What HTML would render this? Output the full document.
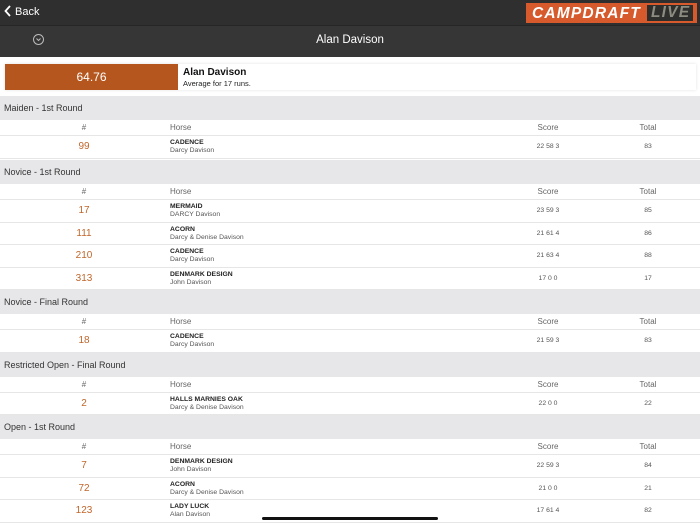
<!DOCTYPE html>
<html><head><meta charset="utf-8"><style>
*{margin:0;padding:0;box-sizing:border-box}
body{width:700px;height:525px;overflow:hidden;background:#fff;font-family:"Liberation Sans",sans-serif;position:relative}
.top{position:absolute;left:0;top:0;width:700px;height:25px;background:#2f2f2f}
.sub{position:absolute;left:0;top:25px;width:700px;height:32px;background:#363636;border-top:1px solid #262626}
.back{position:absolute;left:4px;top:5px;color:#fff;font-size:11px}
.title{position:absolute;left:0;width:700px;top:34px;text-align:center;color:#fff;font-size:11.5px}
.circ{position:absolute;left:33px;top:34px;width:11px;height:11px;border:1px solid #bbb;border-radius:50%}
.logo{position:absolute;left:526px;top:3px;width:171px;height:20px;background:#d65a2c}
.logo .a{position:absolute;left:6px;top:2px;color:#fff;font-weight:bold;font-style:italic;font-size:15.5px;letter-spacing:1.2px}
.logo .b{position:absolute;left:121px;top:2px;width:46px;height:16px;background:#2e2e2c}
.logo .b span{position:absolute;left:4px;top:-1px;color:#8c8c80;font-weight:bold;font-style:italic;font-size:15.5px;letter-spacing:1.2px}
.card{position:absolute;left:5px;top:64px;width:691px;height:26px;background:#fff;box-shadow:0 0 3px rgba(0,0,0,.12)}
.avg{position:absolute;left:0;top:0;width:173px;height:26px;background:#b5561f;color:#fff;font-size:12px;text-align:center;line-height:26px}
.nm{position:absolute;left:178px;top:3px;font-size:10px;font-weight:bold;color:#111}
.sm{position:absolute;left:178px;top:15px;font-size:7.5px;color:#222}
.list{position:absolute;left:0;top:96px;width:700px}
.sec{height:24px;background:#e7e7e9;font-size:9px;color:#333;padding-left:4px;line-height:24px}
.hd,.row{position:relative;border-bottom:1px solid #e6e6e6}
.hd{height:16px;font-size:8px;color:#666}
.row{height:22.5px}
.c1{position:absolute;left:44px;width:80px;text-align:center}
.c2{position:absolute;left:170px}
.c3{position:absolute;left:508px;width:80px;text-align:center}
.c4{position:absolute;left:608px;width:80px;text-align:center}
.hd span{top:3px}
.row .c1{top:5px;color:#c0662b;font-size:10px}
.row .c2{top:3px;font-size:6.8px;font-weight:bold;color:#222}
.row .c2 i{display:block;font-style:normal;font-weight:normal;color:#555;margin-top:1px}
.row .c3,.row .c4{top:7px;font-size:6.8px;color:#555}
.gap{height:1.5px;background:#fff}
.bar{position:absolute;left:262px;top:517px;width:176px;height:3px;border-radius:2px;background:#111}
</style></head><body>
<div class="top"></div><div class="sub"></div>
<div class="back"><svg width="8" height="12" viewBox="0 0 8 12" style="vertical-align:-2px"><path d="M6 1L1.5 6L6 11" stroke="#fff" stroke-width="1.8" fill="none"/></svg> Back</div>
<div class="circ"><svg width="9" height="9" viewBox="0 0 9 9" style="position:absolute;left:0;top:0"><path d="M2.5 3.5L4.5 5.5L6.5 3.5" stroke="#bbb" stroke-width="1" fill="none"/></svg></div>
<div class="title">Alan Davison</div>
<div class="logo"><span class="a">CAMPDRAFT</span><div class="b"><span>LIVE</span></div></div>
<div class="card"><div class="avg">64.76</div><div class="nm">Alan Davison</div><div class="sm">Average for 17 runs.</div></div>
<div class="list">
<div class="sec">Maiden - 1st Round</div>
<div class="hd"><span class="c1">#</span><span class="c2">Horse</span><span class="c3">Score</span><span class="c4">Total</span></div>
<div class="row"><span class="c1">99</span><span class="c2">CADENCE<i>Darcy Davison</i></span><span class="c3">22 58 3</span><span class="c4">83</span></div>
<div class="gap"></div>
<div class="sec">Novice - 1st Round</div>
<div class="hd"><span class="c1">#</span><span class="c2">Horse</span><span class="c3">Score</span><span class="c4">Total</span></div>
<div class="row"><span class="c1">17</span><span class="c2">MERMAID<i>DARCY Davison</i></span><span class="c3">23 59 3</span><span class="c4">85</span></div>
<div class="row"><span class="c1">111</span><span class="c2">ACORN<i>Darcy &amp; Denise Davison</i></span><span class="c3">21 61 4</span><span class="c4">86</span></div>
<div class="row"><span class="c1">210</span><span class="c2">CADENCE<i>Darcy Davison</i></span><span class="c3">21 63 4</span><span class="c4">88</span></div>
<div class="row"><span class="c1">313</span><span class="c2">DENMARK DESIGN<i>John Davison</i></span><span class="c3">17 0 0</span><span class="c4">17</span></div>
<div class="sec">Novice - Final Round</div>
<div class="hd"><span class="c1">#</span><span class="c2">Horse</span><span class="c3">Score</span><span class="c4">Total</span></div>
<div class="row"><span class="c1">18</span><span class="c2">CADENCE<i>Darcy Davison</i></span><span class="c3">21 59 3</span><span class="c4">83</span></div>
<div class="sec">Restricted Open - Final Round</div>
<div class="hd"><span class="c1">#</span><span class="c2">Horse</span><span class="c3">Score</span><span class="c4">Total</span></div>
<div class="row"><span class="c1">2</span><span class="c2">HALLS MARNIES OAK<i>Darcy &amp; Denise Davison</i></span><span class="c3">22 0 0</span><span class="c4">22</span></div>
<div class="sec">Open - 1st Round</div>
<div class="hd"><span class="c1">#</span><span class="c2">Horse</span><span class="c3">Score</span><span class="c4">Total</span></div>
<div class="row"><span class="c1">7</span><span class="c2">DENMARK DESIGN<i>John Davison</i></span><span class="c3">22 59 3</span><span class="c4">84</span></div>
<div class="row"><span class="c1">72</span><span class="c2">ACORN<i>Darcy &amp; Denise Davison</i></span><span class="c3">21 0 0</span><span class="c4">21</span></div>
<div class="row"><span class="c1">123</span><span class="c2">LADY LUCK<i>Alan Davison</i></span><span class="c3">17 61 4</span><span class="c4">82</span></div>
</div>
<div class="bar"></div>
</body></html>
